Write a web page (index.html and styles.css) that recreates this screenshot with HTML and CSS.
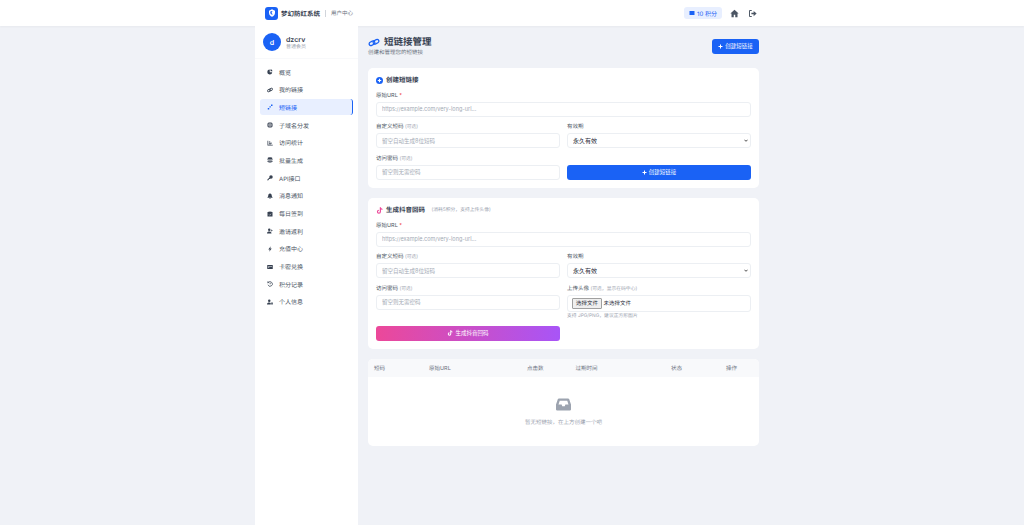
FILE: index.html
```html
<!DOCTYPE html>
<html lang="zh-CN">
<head>
  <meta charset="UTF-8" />
  <meta name="viewport" content="width=device-width, initial-scale=1.0"/>
  <title>短链接管理</title>
  <link rel="stylesheet" href="styles.css">
</head>
<body>

  <header class="topbar">
    <div class="topbar-inner">
      <div class="brand">
        <span class="brand-logo">
          <svg viewBox="0 0 24 24" width="8" height="8"><path fill="#fff" d="M12 1l9 4v6c0 6-4 10-9 12-5-2-9-6-9-12V5z"/><path fill="#1a62f5" d="M12 6a5 5 0 1 0 3 9 4 4 0 0 1 0-8 5 5 0 0 0-3-1z"/></svg>
        </span>
        <span class="brand-name">梦幻防红系统</span>
        <span class="brand-sep"></span>
        <span class="brand-sub">用户中心</span>
      </div>
      <div class="top-actions">
        <span class="points">
          <svg viewBox="0 0 24 24" width="6" height="6"><path fill="#1a62f5" d="M2 4h20v16H2z"/></svg>
          10 积分
        </span>
        <svg class="top-icon" viewBox="0 0 24 24" width="9" height="9"><path fill="#4b5563" d="M12 2L1 12h3v10h6v-7h4v7h6V12h3z"/></svg>
        <svg class="top-icon" viewBox="0 0 24 24" width="9" height="9"><path fill="none" stroke="#4b5563" stroke-width="2.6" d="M10 4H4v16h6"/><path fill="#4b5563" d="M9 10h6V5l8 7-8 7v-5H9z"/></svg>
      </div>
    </div>
  </header>

  <div class="shell">
    <aside class="sidebar">
      <div class="user">
        <span class="avatar">d</span>
        <div>
          <div class="user-name">dzcrv</div>
          <div class="user-role">普通会员</div>
        </div>
      </div>
      <nav class="nav">
        <a class="nav-item"><svg viewBox="0 0 24 24"><path d="M11 2a10 10 0 1 0 10 11H11z"/><path d="M14 1v8h8a9 9 0 0 0-8-8z"/></svg>概览</a>
        <a class="nav-item"><svg viewBox="0 0 24 24"><g fill="none" stroke="#374151" stroke-width="3.4"><rect x="1" y="10" width="14" height="8" rx="4" transform="rotate(-25 8 14)"/><rect x="9" y="6" width="14" height="8" rx="4" transform="rotate(-25 16 10)"/></g></svg>我的链接</a>
        <a class="nav-item active"><svg viewBox="0 0 24 24"><path d="M3 16h6v6H3zM10 9h5v5h-5zM16 2h6v6h-6z"/></svg>短链接</a>
        <a class="nav-item"><svg viewBox="0 0 24 24"><circle cx="12" cy="12" r="11"/><path stroke="#fff" stroke-width="1.6" fill="none" d="M1 9h22M1 15h22M12 1c-5 6-5 16 0 22M12 1c5 6 5 16 0 22"/></svg>子域名分发</a>
        <a class="nav-item"><svg viewBox="0 0 24 24"><path d="M2 3h3v16h18v3H2zM8 6h5v3H8zM8 11h12v3H8zM8 15h8v2H8z"/></svg>访问统计</a>
        <a class="nav-item"><svg viewBox="0 0 24 24"><ellipse cx="12" cy="5" rx="10" ry="4"/><path d="M2 8c3 3 17 3 20 0v4c-3 3-17 3-20 0zM2 15c3 3 17 3 20 0v4c-3 4-17 4-20 0z"/></svg>批量生成</a>
        <a class="nav-item"><svg viewBox="0 0 24 24"><circle cx="16" cy="8" r="7"/><path d="M11 10l3 3-3 3H8v3H5v3H2v-5z"/></svg>API接口</a>
        <a class="nav-item"><svg viewBox="0 0 24 24"><path d="M12 1a2 2 0 0 1 2 2c4 1 5 4 5 8 0 3 1 4 3 6v2H2v-2c2-2 3-3 3-6 0-4 1-7 5-8a2 2 0 0 1 2-2zM9 20h6a3 3 0 0 1-6 0z"/></svg>消息通知</a>
        <a class="nav-item"><svg viewBox="0 0 24 24"><path d="M7 1h3v3h4V1h3v3h5v18H2V4h5z"/><path stroke="#fff" stroke-width="2" fill="none" d="M8 14l3 3 5-6"/></svg>每日签到</a>
        <a class="nav-item"><svg viewBox="0 0 24 24"><circle cx="9" cy="7" r="5"/><path d="M0 22c0-6 4-8 9-8s9 2 9 8zM18 6h2v3h3v2h-3v3h-2v-3h-3V9h3z"/></svg>邀请返利</a>
        <a class="nav-item"><svg viewBox="0 0 24 24"><path d="M15 1L5 14h6l-2 9 10-13h-6z"/></svg>充值中心</a>
        <a class="nav-item"><svg viewBox="0 0 24 24"><path d="M1 4h22v16H1z"/><path fill="#fff" d="M4 8h16v2H4zM4 14h5v2H4z"/></svg>卡密兑换</a>
        <a class="nav-item"><svg viewBox="0 0 24 24"><path fill="none" stroke="#374151" stroke-width="3" d="M5 7a9 9 0 1 1-1 8"/><path d="M1 2l8 1-6 7zM11 7h3v6h-3z"/></svg>积分记录</a>
        <a class="nav-item"><svg viewBox="0 0 24 24"><circle cx="9" cy="7" r="5"/><path d="M0 22c0-6 4-8 9-8 3 0 5 1 6 2v6zM17 14h6v8h-6z"/></svg>个人信息</a>
      </nav>
    </aside>

    <main class="main">
      <div class="page-head">
        <div>
          <h1 class="page-title">
            <svg viewBox="0 0 24 18" width="12" height="9"><g fill="none" stroke="#1a62f5" stroke-width="2.6"><rect x="2" y="7" width="12" height="7" rx="3.5" transform="rotate(-28 8 10.5)"/><rect x="10" y="4" width="12" height="7" rx="3.5" transform="rotate(-28 16 7.5)"/></g></svg>
            短链接管理
          </h1>
          <p class="page-sub">创建和管理您的短链接</p>
        </div>
        <button class="btn btn-head"><svg viewBox="0 0 10 10" width="5" height="5"><path fill="#fff" d="M4 1h2v3h3v2H6v3H4V6H1V4h3z"/></svg>创建短链接</button>
      </div>

      <section class="card">
        <h2 class="card-title">
          <svg viewBox="0 0 24 24" width="7" height="7"><circle cx="12" cy="12" r="12" fill="#1a62f5"/><path fill="#fff" d="M10 6h4v4h4v4h-4v4h-4v-4H6v-4h4z"/></svg>
          创建短链接
        </h2>
        <div class="field field-wide">
          <label class="label">原始URL <span class="req">*</span></label>
          <input class="input" placeholder="https://example.com/very-long-url...">
        </div>
        <div class="form-grid">
          <div class="field">
            <label class="label">自定义短码 <span class="opt">(可选)</span></label>
            <input class="input" placeholder="留空自动生成8位短码">
          </div>
          <div class="field">
            <label class="label">有效期</label>
            <select class="input select"><option>永久有效</option></select>
          </div>
          <div class="field">
            <label class="label">访问密码 <span class="opt">(可选)</span></label>
            <input class="input" placeholder="留空则无需密码">
          </div>
          <div class="field field-end">
            <button class="btn btn-submit"><svg viewBox="0 0 10 10" width="5" height="5"><path fill="#fff" d="M4 1h2v3h3v2H6v3H4V6H1V4h3z"/></svg>创建短链接</button>
          </div>
        </div>
      </section>

      <section class="card">
        <h2 class="card-title">
          <svg viewBox="0 0 24 24" width="7" height="7"><path fill="#ec4899" d="M13 1h4c0 3 2 5 5 5v4c-2 0-4-1-5-2v8a7 7 0 1 1-7-7v4a3 3 0 1 0 3 3z"/></svg>
          生成抖音回码
          <span class="card-note">(消耗5积分，支持上传头像)</span>
        </h2>
        <div class="field field-wide">
          <label class="label">原始URL <span class="req">*</span></label>
          <input class="input" placeholder="https://example.com/very-long-url...">
        </div>
        <div class="form-grid">
          <div class="field">
            <label class="label">自定义短码 <span class="opt">(可选)</span></label>
            <input class="input" placeholder="留空自动生成8位短码">
          </div>
          <div class="field">
            <label class="label">有效期</label>
            <select class="input select"><option>永久有效</option></select>
          </div>
          <div class="field">
            <label class="label">访问密码 <span class="opt">(可选)</span></label>
            <input class="input" placeholder="留空则无需密码">
          </div>
          <div class="field">
            <label class="label">上传头像 <span class="opt">(可选，显示在码中心)</span></label>
            <div class="input file-box"><span class="file-btn">选择文件</span>未选择文件</div>
            <div class="hint">支持 JPG/PNG，建议正方形图片</div>
          </div>
          <div class="field">
            <button class="btn btn-douyin">
              <svg viewBox="0 0 24 24" width="6" height="6"><path fill="#fff" d="M13 1h4c0 3 2 5 5 5v4c-2 0-4-1-5-2v8a7 7 0 1 1-7-7v4a3 3 0 1 0 3 3z"/></svg>
              生成抖音回码
            </button>
          </div>
        </div>
      </section>

      <section class="card card-table">
        <div class="table-head">
          <span class="col-code">短码</span>
          <span class="col-url">原始URL</span>
          <span class="col-clicks">点击数</span>
          <span class="col-exp">过期时间</span>
          <span class="col-status">状态</span>
          <span>操作</span>
        </div>
        <div class="empty">
          <svg viewBox="0 0 24 24" width="15" height="13" preserveAspectRatio="none"><path fill="#9ca3af" d="M5 1h14a2 2 0 0 1 2 1l3 10v9a2 2 0 0 1-2 2H2a2 2 0 0 1-2-2v-9L3 2a2 2 0 0 1 2-1z"/><path fill="#fff" d="M6 5h12l2 7h-5l-1 3h-4l-1-3H4z"/></svg>
          <p>暂无短链接，在上方创建一个吧</p>
        </div>
      </section>
    </main>
  </div>

</body>
</html>
```

FILE: styles.css
```css
:root {
  --blue: #1a62f5;
  --page: #f0f2f7;
  --text: #1f2937;
  --muted: #9ca3af;
  --label: #4b5563;
}

* {
  box-sizing: border-box;
}

body {
  margin: 0;
  background-color: var(--page);
  color: var(--text);
  font-family: Inter, "Noto Sans CJK SC", sans-serif;
  font-size: 6px;
  text-rendering: geometricPrecision;
}

.topbar {
  height: 26px;
  background: white;
  box-shadow: 0 1px 2px rgba(0, 0, 0, 0.04);
}

.topbar-inner {
  width: 514px;
  height: 100%;
  margin-left: 255px;
  padding: 0 10px;
  display: flex;
  align-items: center;
  justify-content: space-between;
}

.brand {
  display: flex;
  align-items: center;
}

.brand-logo {
  width: 13px;
  height: 13px;
  border-radius: 3px;
  background: var(--blue);
  display: flex;
  align-items: center;
  justify-content: center;
  margin-right: 3px;
}

.brand-name {
  font-size: 6.5px;
  font-weight: 700;
  color: #374151;
}

.brand-sep {
  width: 1px;
  height: 7px;
  background: #d1d5db;
  margin: 0 5px;
}

.brand-sub {
  font-size: 5.5px;
  color: #6b7280;
}

.top-actions {
  display: flex;
  align-items: center;
}

.points {
  height: 12px;
  padding: 0 5px;
  border-radius: 3px;
  background: #e8efff;
  color: var(--blue);
  display: flex;
  align-items: center;
  gap: 2px;
  margin-right: 8px;
}

.top-icon {
  margin-right: 9px;
}

.top-icon:last-child {
  margin-right: 2px;
}

.shell {
  width: 514px;
  margin-left: 255px;
  display: flex;
}

.sidebar {
  width: 103px;
  height: 499px;
  flex-shrink: 0;
  background: white;
}

.user {
  height: 33px;
  padding: 7px 8px 0;
  display: flex;
  gap: 5px;
  border-bottom: 1px solid #f8f9fb;
}

.avatar {
  width: 18px;
  height: 18px;
  border-radius: 50%;
  background: var(--blue);
  color: white;
  font-size: 7px;
  font-weight: 600;
  display: flex;
  align-items: center;
  justify-content: center;
}

.user-name {
  font-size: 7px;
  font-weight: 600;
  color: #374151;
  line-height: 9px;
  margin-top: 2px;
}

.user-role {
  font-size: 5px;
  color: var(--muted);
  line-height: 7px;
}

.nav {
  padding: 5px 5px 0;
}

.nav-item {
  height: 16px;
  margin-bottom: 1.7px;
  padding-left: 7px;
  border-radius: 3px;
  display: flex;
  align-items: center;
  gap: 6px;
  color: #4b5563;
  font-size: 6px;
}

.nav-item svg {
  width: 6px;
  height: 6px;
  fill: #374151;
  flex-shrink: 0;
}

.nav-item.active {
  background: #e8efff;
  color: var(--blue);
  border-right: 1.5px solid var(--blue);
}

.nav-item.active svg {
  fill: var(--blue);
}

.main {
  flex: 1;
  padding: 8px 10px 0;
}

.page-head {
  display: flex;
  justify-content: space-between;
  align-items: center;
  height: 24px;
  margin-bottom: 10px;
}

.page-title {
  margin: 0;
  font-size: 9.5px;
  font-weight: 700;
  color: #374151;
  line-height: 13px;
  display: flex;
  align-items: center;
  gap: 4px;
}

.page-sub {
  margin: 0;
  font-size: 5.5px;
  line-height: 8px;
  color: #6b7280;
}

.btn {
  border: none;
  border-radius: 3px;
  background: var(--blue);
  color: white;
  font-family: inherit;
  font-size: 5.5px;
  white-space: nowrap;
  display: flex;
  align-items: center;
  justify-content: center;
  gap: 2px;
}

.btn-head {
  width: 47px;
  height: 15px;
}

.card {
  background: white;
  border-radius: 5px;
  padding: 8px 8px 8.5px;
  margin-bottom: 10px;
}

.card-title {
  margin: 0 0 6.5px;
  font-size: 6.5px;
  font-weight: 600;
  color: #374151;
  line-height: 9px;
  display: flex;
  align-items: center;
  gap: 3px;
}

.card-note {
  font-size: 4.8px;
  font-weight: 400;
  color: var(--muted);
  margin-left: 3.5px;
}

.field {
  min-width: 0;
}

.field-wide {
  margin-bottom: 6.5px;
}

.label {
  display: flex;
  align-items: center;
  gap: 1.5px;
  height: 8px;
  color: var(--label);
  font-size: 5.5px;
  line-height: 8px;
  margin-bottom: 2px;
}

.req {
  color: #ef4444;
}

.opt {
  font-size: 4.8px;
  color: var(--muted);
}

.input {
  display: block;
  width: 100%;
  height: 15px;
  padding: 0 5px;
  border: 1px solid #eceff3;
  border-radius: 3px;
  background: white;
  color: #374151;
  font-family: inherit;
  font-size: 5.5px;
}

.input::placeholder {
  color: #a3aab5;
}

.form-grid {
  display: grid;
  grid-template-columns: 1fr 1fr;
  column-gap: 7px;
  row-gap: 6.5px;
}

.field-end {
  display: flex;
  align-items: flex-end;
}

.btn-submit {
  width: 100%;
  height: 15px;
}

.select {
  appearance: none;
  padding-left: 5px;
  color: #1f2937;
  font-size: 6px;
  background: white url("data:image/svg+xml,%3Csvg xmlns='http://www.w3.org/2000/svg' viewBox='0 0 10 6'%3E%3Cpath fill='none' stroke='%23222' stroke-width='2' d='M1 1l4 4 4-4'/%3E%3C/svg%3E") no-repeat right 2px center / 4px 3px;
}

.file-box {
  height: 17.5px;
  margin-bottom: 1px;
  padding-left: 4px;
  display: flex;
  align-items: center;
  gap: 1.5px;
  color: #1f2937;
}

.file-btn {
  height: 11px;
  padding: 0 3px;
  display: flex;
  align-items: center;
  background: #efefef;
  border: 1px solid #a0a0a0;
  border-radius: 1px;
}

.hint {
  font-size: 4.8px;
  line-height: 6.5px;
  color: var(--muted);
}

.btn-douyin {
  width: 100%;
  height: 14.5px;
  background: linear-gradient(90deg, #ec4899, #a855f7);
}

.card-table {
  padding: 0;
  overflow: hidden;
}

.table-head {
  height: 18px;
  padding: 0 6px;
  background: #f8f9fb;
  color: #6b7280;
  font-size: 5.5px;
  display: flex;
  align-items: center;
}

.col-code { width: 55px; }
.col-url { width: 98px; }
.col-clicks { width: 48.5px; }
.col-exp { width: 95.5px; }
.col-status { width: 55px; }

.empty {
  height: 68.5px;
  padding-top: 21px;
  display: flex;
  flex-direction: column;
  align-items: center;
  color: var(--muted);
  font-size: 5.5px;
}

.empty p {
  margin: 7px 0 0;
}
```
